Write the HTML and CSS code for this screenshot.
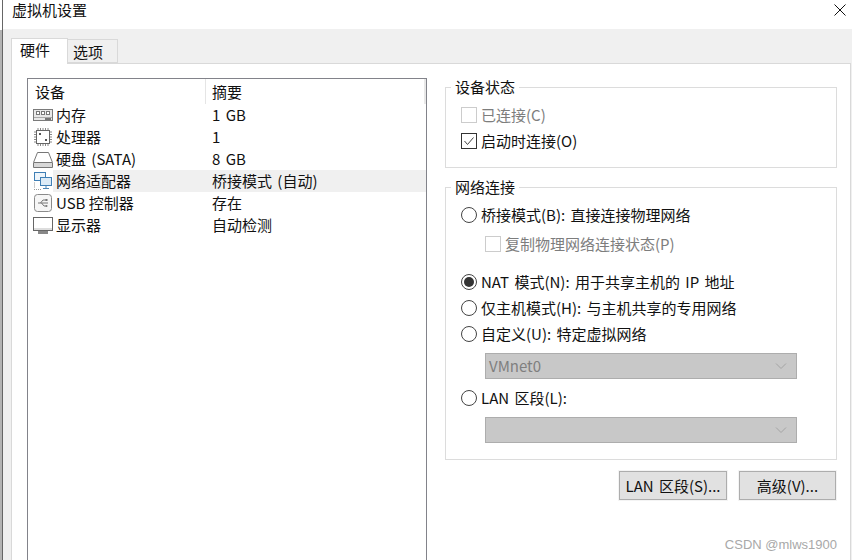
FILE: index.html
```html
<!DOCTYPE html>
<html lang="zh-CN">
<head>
    <meta charset="UTF-8">
    <title>虚拟机设置</title>
    <link rel="stylesheet" href="styles.css">
</head>
<body>
<div class="window">
    <div class="titlebar">
        <span>虚拟机设置</span>
        <svg class="close" width="12" height="12" viewBox="0 0 12 12"><path d="M0.5 0.5L11.5 11.5M11.5 0.5L0.5 11.5" stroke="#111" fill="none"/></svg>
    </div>
    <div class="tabstrip">
        <div class="tab active">硬件</div>
        <div class="tab">选项</div>
    </div>
    <div class="panel">
        <div class="device-list">
            <div class="list-header">
                <div class="head-name">设备</div>
                <div class="head-summary">摘要</div>
            </div>
            <div class="row">
                <svg class="icon" width="20" height="20" viewBox="0 0 20 20">
                    <rect x="0.5" y="4.5" width="19" height="11" fill="#e8e8e8" stroke="#7a7a7a"/>
                    <rect x="3.5" y="6.5" width="3" height="3" fill="#fff" stroke="#777"/>
                    <rect x="8.5" y="6.5" width="3" height="3" fill="#fff" stroke="#777"/>
                    <rect x="13.5" y="6.5" width="3" height="3" fill="#fff" stroke="#777"/>
                    <path d="M1 12.5H19" stroke="#aaa"/>
                    <rect x="12" y="13" width="6" height="2" fill="#777"/>
                </svg>
                <div class="cells"><span class="name">内存</span><span>1 GB</span></div>
            </div>
            <div class="row">
                <svg class="icon" width="20" height="20" viewBox="0 0 20 20">
                    <rect x="3.5" y="3.5" width="13" height="13" fill="#fff" stroke="#666"/>
                    <path d="M5 1V3M7.5 1V3M10 1V3M12.5 1V3M15 1V3M5 17V19M7.5 17V19M10 17V19M12.5 17V19M15 17V19M1 5H3M1 7.5H3M1 10H3M1 12.5H3M1 15H3M17 5H19M17 7.5H19M17 10H19M17 12.5H19M17 15H19" stroke="#888"/>
                    <rect x="6" y="6" width="2" height="2" fill="#555"/>
                    <rect x="12" y="12" width="2" height="2" fill="#555"/>
                </svg>
                <div class="cells"><span class="name">处理器</span><span>1</span></div>
            </div>
            <div class="row">
                <svg class="icon" width="20" height="20" viewBox="0 0 20 20">
                    <path d="M4.5 3.5H15.5L19.5 13.5V18.5H0.5V13.5Z" fill="#fff" stroke="#777"/>
                    <path d="M1 13.5H19" stroke="#777"/>
                    <rect x="1" y="14" width="18" height="4" fill="#d8d8d8"/>
                </svg>
                <div class="cells"><span class="name">硬盘 (SATA)</span><span>8 GB</span></div>
            </div>
            <div class="row selected">
                <svg class="icon" width="20" height="20" viewBox="0 0 20 20">
                    <rect x="1.5" y="1.5" width="11" height="8" fill="#eef5fb" stroke="#3f7fb5"/>
                    <rect x="7.5" y="6.5" width="11" height="8" fill="#dcebf7" stroke="#3f7fb5"/>
                    <path d="M13 15V17M10 17.5H16" stroke="#4d85b5"/>
                    <path d="M1 12H3M1 14H3M1 16H3M1 18.5H8" stroke="#9a9a9a" stroke-dasharray="1 1"/>
                </svg>
                <div class="cells"><span class="name">网络适配器</span><span>桥接模式 (自动)</span></div>
            </div>
            <div class="row">
                <svg class="icon" width="20" height="20" viewBox="0 0 20 20">
                    <rect x="1.5" y="1.5" width="17" height="17" rx="3" fill="#f6f6f6" stroke="#8a8a8a"/>
                    <path d="M5 10H15M7.5 10L10 7H13M8.5 10L11 13H13" stroke="#777" fill="none"/>
                    <rect x="12.5" y="6" width="2" height="2" fill="#777"/>
                    <circle cx="13.5" cy="13" r="1" fill="#777"/>
                </svg>
                <div class="cells"><span class="name usb">USB 控制器</span><span>存在</span></div>
            </div>
            <div class="row">
                <svg class="icon" width="20" height="20" viewBox="0 0 20 20">
                    <rect x="0.5" y="2.5" width="19" height="13" fill="#fff" stroke="#666"/>
                    <rect x="1" y="13" width="18" height="2" fill="#ddd"/>
                    <rect x="5" y="16" width="10" height="3" fill="#888"/>
                </svg>
                <div class="cells"><span class="name">显示器</span><span>自动检测</span></div>
            </div>
        </div>

        <div class="settings">
            <fieldset class="group status-group">
                <legend>设备状态</legend>
                <div class="option disabled"><span class="check"></span>已连接(C)</div>
                <div class="option">
                    <span class="check on">
                        <svg width="14" height="14" viewBox="0 0 14 14"><path d="M2.5 7L5.5 10.5L11.5 3.5" stroke="#444" fill="none"/></svg>
                    </span>启动时连接(O)
                </div>
            </fieldset>

            <fieldset class="group network-group">
                <legend>网络连接</legend>
                <div class="option"><span class="radio"></span>桥接模式(B): 直接连接物理网络</div>
                <div class="option sub disabled replicate"><span class="check"></span>复制物理网络连接状态(P)</div>
                <div class="option nat"><span class="radio on"></span>NAT 模式(N): 用于共享主机的 IP 地址</div>
                <div class="option"><span class="radio"></span>仅主机模式(H): 与主机共享的专用网络</div>
                <div class="option"><span class="radio"></span>自定义(U): 特定虚拟网络</div>
                <div class="dropdown">
                    <span>VMnet0</span>
                    <svg width="12" height="8" viewBox="0 0 12 8"><path d="M1 1.5L6 6.5L11 1.5" stroke="#a4a4a4" fill="none"/></svg>
                </div>
                <div class="option lan"><span class="radio"></span>LAN 区段(L):</div>
                <div class="dropdown">
                    <span></span>
                    <svg width="12" height="8" viewBox="0 0 12 8"><path d="M1 1.5L6 6.5L11 1.5" stroke="#a4a4a4" fill="none"/></svg>
                </div>
            </fieldset>

            <div class="buttons">
                <button class="btn btn-lan">LAN 区段(S)...</button>
                <button class="btn btn-adv">高级(V)...</button>
            </div>
        </div>
    </div>
</div>
<div class="watermark">CSDN @mlws1900</div>
</body>
</html>
```

FILE: styles.css
```css
* {
    box-sizing: border-box;
}
html, body {
    height: 100%;
}
body {
    margin: 0;
    padding-left: 2px;
    overflow: hidden;
    position: relative;
    font-family: "Noto Sans CJK SC", sans-serif;
    font-size: 15px;
    line-height: 20px;
    word-spacing: 2px;
    color: #111;
    background: linear-gradient(#fff 30px, #b4b4b4 30px);
}
.window {
    height: 560px;
    display: flex;
    flex-direction: column;
    background-color: #f0f0f0;
    border-left: 1px solid #666;
}
.titlebar {
    height: 29px;
    flex: none;
    padding: 0 6px 0 9px;
    background-color: #fff;
    display: flex;
    justify-content: space-between;
    align-items: flex-start;
}
.close {
    margin-top: 4px;
}
.tabstrip {
    height: 35px;
    flex: none;
    padding-left: 8px;
    display: flex;
    align-items: flex-end;
}
.tab {
    width: 50px;
    height: 24px;
    margin-bottom: 1px;
    padding-left: 5px;
    line-height: 23px;
    border: 1px solid #d9d9d9;
    border-left: none;
}
.tab.active {
    width: 57px;
    height: 26px;
    margin-bottom: 0;
    padding-left: 8px;
    line-height: 22px;
    background-color: #fff;
    border-left: 1px solid #d9d9d9;
    border-bottom: none;
    position: relative;
    z-index: 1;
}
.panel {
    flex: 1;
    min-height: 0;
    margin: -1px 1px 0 8px;
    padding: 14px 0 0 15px;
    display: flex;
    gap: 18px;
    background-color: #fff;
    border: 1px solid #d9d9d9;
    border-bottom: none;
}
.device-list {
    width: 400px;
    flex: none;
    border: 1px solid #82838a;
    border-bottom: none;
}
.list-header {
    height: 25px;
    display: flex;
    align-items: stretch;
    line-height: 25px;
    border-right: 2px solid #e8e8e8;
}
.head-name {
    width: 178px;
    padding-left: 7px;
    border-right: 1px solid #e5e5e5;
}
.head-summary {
    padding-left: 6px;
}
.row {
    height: 22px;
    padding-left: 5px;
    display: flex;
    align-items: center;
}
.icon {
    flex: none;
}
.cells {
    flex: 1;
    height: 22px;
    padding-left: 3px;
    display: flex;
    align-items: center;
}
.row.selected .cells {
    background-color: #f0f0f0;
}
.name {
    width: 156px;
}
.name.usb {
    word-spacing: 0;
}
.settings {
    width: 392px;
    flex: none;
    margin-top: -1px;
}
.group {
    margin: 0;
    padding: 0 0 0 15px;
    border: 1px solid #dcdcdc;
    min-width: 0;
}
.group legend {
    margin-left: -10px;
    padding: 0 4px;
    line-height: 20px;
}
.status-group {
    height: 91px;
}
.network-group {
    height: 283px;
    margin-top: 9px;
    padding-top: 5px;
}
.status-group .option:first-of-type {
    margin-top: 5px;
}
.option {
    height: 26px;
    display: flex;
    align-items: center;
}
.option.sub {
    padding-left: 24px;
}
.option.disabled {
    color: #7d7d7d;
}
.replicate {
    margin-top: 3px;
}
.nat {
    margin-top: 12px;
}
.lan {
    margin-top: 6px;
}
.check, .radio {
    width: 16px;
    height: 16px;
    flex: none;
    margin-right: 4px;
}
.check {
    border: 1px solid #ccc;
    display: flex;
    align-items: center;
    justify-content: center;
}
.check.on {
    border-color: #333;
}
.radio {
    border: 1px solid #444;
    border-radius: 50%;
    display: flex;
    align-items: center;
    justify-content: center;
}
.radio.on::after {
    content: "";
    width: 10px;
    height: 10px;
    border-radius: 50%;
    background-color: #333;
}
.dropdown {
    width: 312px;
    height: 26px;
    margin: 6px 0 0 24px;
    padding: 0 9px 0 3px;
    display: flex;
    justify-content: space-between;
    align-items: center;
    color: #7f7f7f;
    background-color: #c8c8c8;
    border: 1px solid #adadad;
}
.buttons {
    margin-top: 11px;
    display: flex;
    justify-content: flex-end;
    gap: 12px;
}
.btn {
    height: 29px;
    padding: 0;
    font: inherit;
    word-spacing: 2px;
    color: #111;
    background-color: #e1e1e1;
    border: 1px solid #adadad;
    box-shadow: 0 0 0 1px #f4f4f4;
}
.btn-lan {
    width: 108px;
}
.btn-adv {
    width: 97px;
    margin-right: 1px;
}
.watermark {
    position: absolute;
    right: 15px;
    top: 536px;
    font-family: "Liberation Sans", sans-serif;
    font-size: 13px;
    line-height: 18px;
    word-spacing: 0;
    color: #a8a8a8;
}
```
